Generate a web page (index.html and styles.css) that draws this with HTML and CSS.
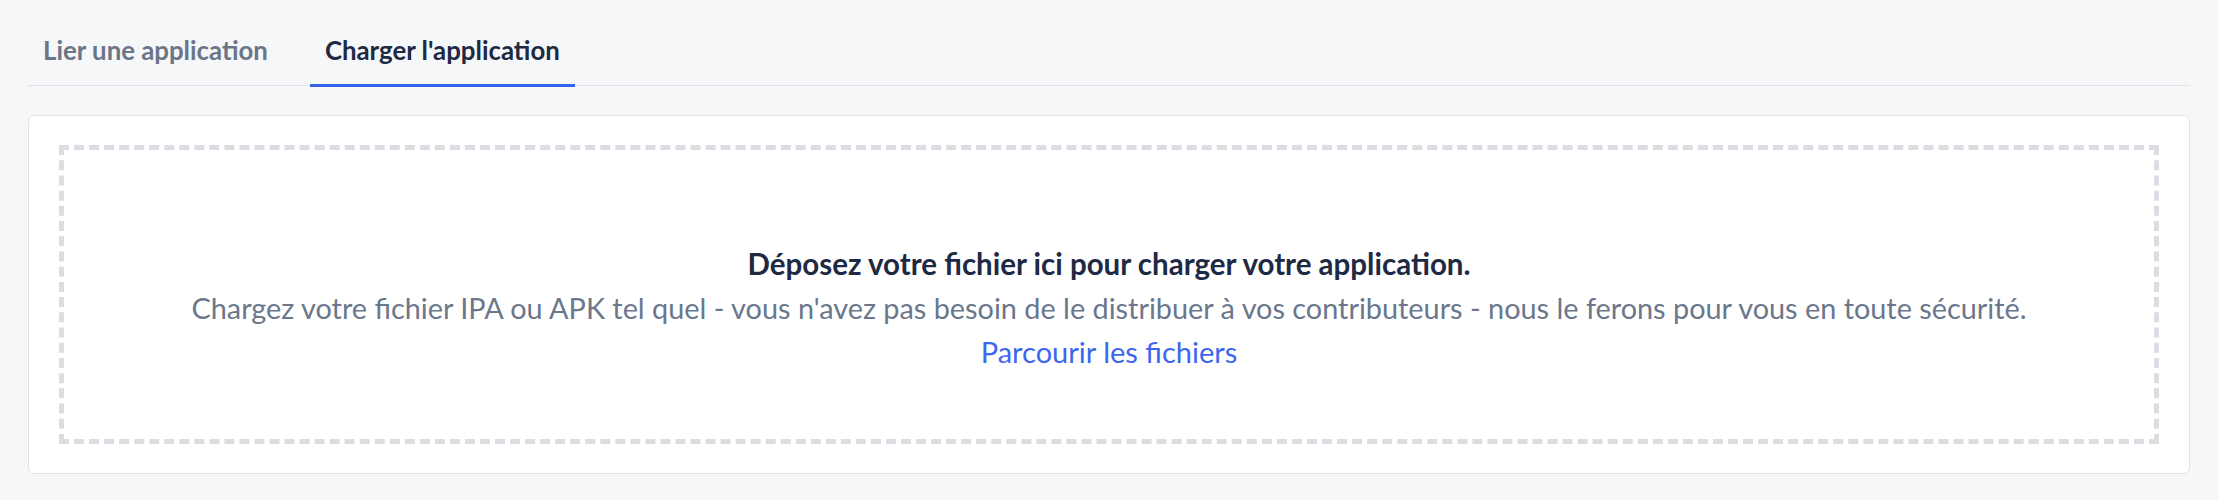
FILE: index.html
```html
<!DOCTYPE html>
<html lang="fr">
<head>
<meta charset="utf-8">
<link rel="stylesheet" href="styles.css">
</head>
<body>
<div class="page">
  <nav class="tabs">
    <a class="tab">Lier une application</a>
    <a class="tab tab-active">Charger l'application</a>
  </nav>
  <section class="card">
    <div class="dropzone">
      <p class="drop-title">Déposez votre fichier ici pour charger votre application.</p>
      <p class="drop-text">Chargez votre fichier IPA ou APK tel quel - vous n'avez pas besoin de le distribuer à vos contributeurs - nous le ferons pour vous en toute sécurité.</p>
      <a class="drop-link">Parcourir les fichiers</a>
    </div>
  </section>
</div>
</body>
</html>
```
FILE: styles.css
```css
html, body {
  margin: 0;
  padding: 0;
  background: #f6f7f9;
}
body {
  font-family: Lato, "Liberation Sans", sans-serif;
}
.page {
  padding: 0 28px;
}
.tabs {
  display: flex;
  gap: 27px;
  height: 85px;
  border-bottom: 1px solid #e1e3e7;
}
.tab {
  box-sizing: border-box;
  height: 87px;
  margin-bottom: -2px;
  padding: 16px 15px 0;
  display: flex;
  align-items: center;
  border-bottom: 3px solid transparent;
  font-size: 25.8px;
  font-weight: 700;
  color: #6b7588;
  cursor: pointer;
}
.tab-active {
  color: #1e2a43;
  border-bottom-color: #3563eb;
}
.card {
  margin-top: 29px;
  background: #fff;
  border: 1px solid #e1e3e7;
  border-radius: 6px;
  padding: 29px 30px;
}
.dropzone {
  box-sizing: border-box;
  height: 299px;
  border: 5px dashed #dcdde2;
  padding-top: 92px;
  display: flex;
  flex-direction: column;
  align-items: center;
  text-align: center;
}
.drop-title {
  margin: 0;
  font-size: 29.5px;
  line-height: 44px;
  font-weight: 700;
  color: #1e2a43;
}
.drop-text {
  margin: 0;
  font-size: 28.85px;
  line-height: 44px;
  color: #6a778c;
}
.drop-link {
  font-size: 29px;
  line-height: 43px;
  color: #3d66f0;
  cursor: pointer;
}
```
